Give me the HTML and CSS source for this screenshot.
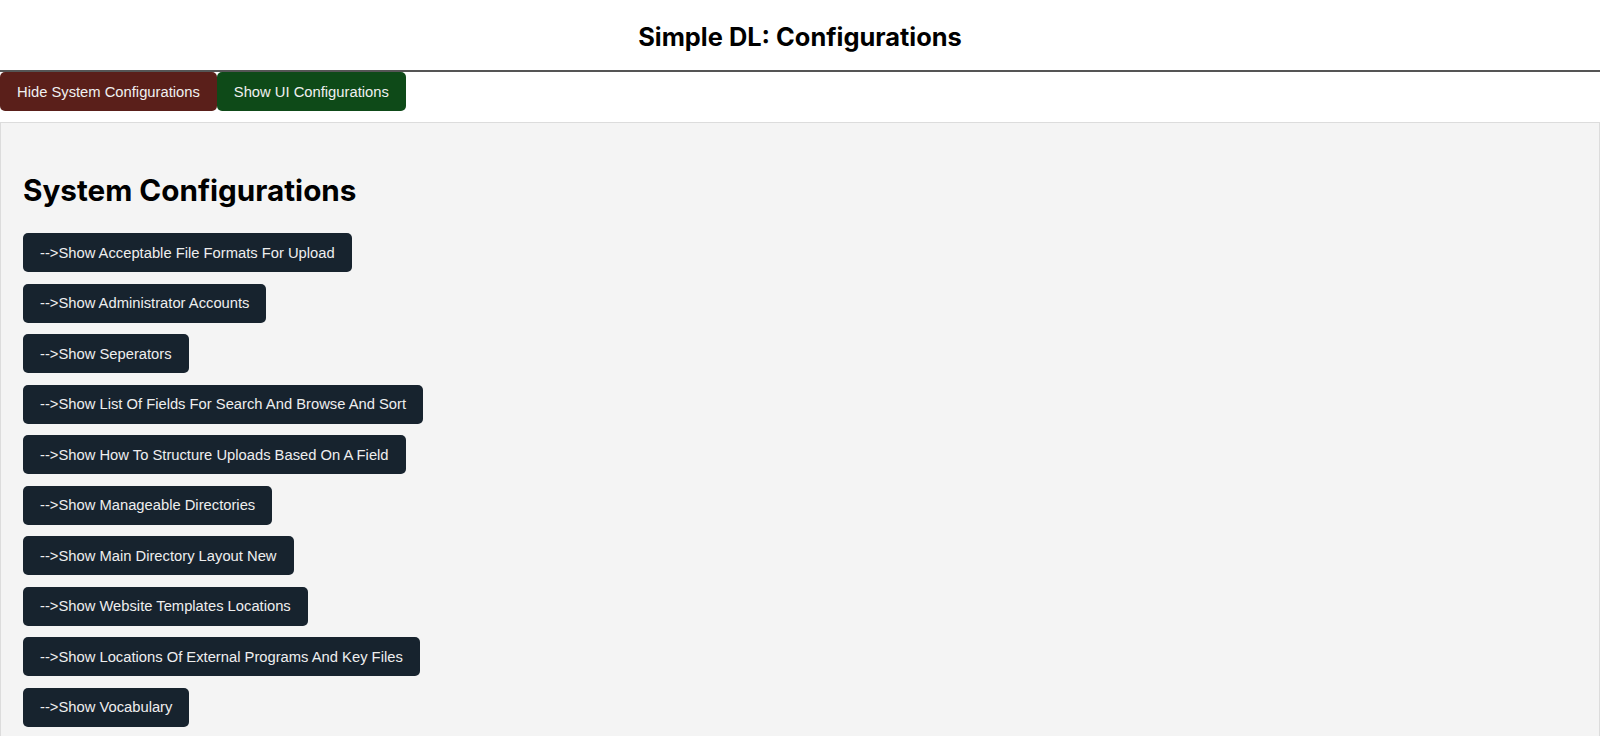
FILE: index.html
```html
<!DOCTYPE html>
<html>
<head>
<meta charset="utf-8">
<title>Simple DL: Configurations</title>
<link rel="stylesheet" href="styles.css">
</head>
<body>
<header class="top">
  <h1 class="title">Simple DL: Configurations</h1>
</header>
<nav class="toggles">
  <button class="toggle toggle-red">Hide System Configurations</button>
  <button class="toggle toggle-green">Show UI Configurations</button>
</nav>
<section class="panel">
  <h2 class="panel-title">System Configurations</h2>
  <div class="list">
    <button class="cfg">--&gt;Show Acceptable File Formats For Upload</button>
    <button class="cfg">--&gt;Show Administrator Accounts</button>
    <button class="cfg">--&gt;Show Seperators</button>
    <button class="cfg">--&gt;Show List Of Fields For Search And Browse And Sort</button>
    <button class="cfg">--&gt;Show How To Structure Uploads Based On A Field</button>
    <button class="cfg">--&gt;Show Manageable Directories</button>
    <button class="cfg">--&gt;Show Main Directory Layout New</button>
    <button class="cfg">--&gt;Show Website Templates Locations</button>
    <button class="cfg">--&gt;Show Locations Of External Programs And Key Files</button>
    <button class="cfg">--&gt;Show Vocabulary</button>
  </div>
</section>
</body>
</html>
```

FILE: styles.css
```css
html, body {
  margin: 0;
  padding: 0;
  background: #ffffff;
}
body {
  font-family: "Liberation Sans", Arial, sans-serif;
  color: #000;
}
.top {
  border-bottom: 2px solid #555555;
  height: 72px;
  box-sizing: border-box;
  display: flex;
  justify-content: center;
  align-items: flex-start;
}
.title {
  font-family: Inter, "Noto Sans", sans-serif;
  font-weight: 700;
  font-size: 25.4px;
  margin: 0;
  padding-top: 22px;
  line-height: 1.21;
}
.toggles {
  display: flex;
  height: 39px;
  margin-bottom: 11px;
}
.toggle {
  font-family: "Liberation Sans", Arial, sans-serif;
  font-size: 14.75px;
  color: #f0f0f0;
  border: none;
  border-radius: 5px;
  padding: 0 17px;
  height: 39px;
  margin: 0;
  cursor: pointer;
}
.toggle-red { background: #5a1f1a; }
.toggle-green { background: #0e4a18; }
.panel {
  background: #f4f4f4;
  border: 1px solid #dcdcdc;
  padding: 0 22px 22px;
  min-height: 700px;
}
.panel-title {
  font-family: Inter, "Noto Sans", sans-serif;
  font-weight: 700;
  font-size: 29.7px;
  line-height: 1.21;
  margin: 49.8px 0 24.6px;
}
.list {
  display: flex;
  flex-direction: column;
  align-items: flex-start;
  gap: 11.5px;
}
.cfg {
  font-family: "Liberation Sans", Arial, sans-serif;
  font-size: 14.75px;
  color: #eeeeee;
  background: #17232e;
  border: none;
  border-radius: 5px;
  height: 39px;
  padding: 0 17px;
  margin: 0;
  cursor: pointer;
}
```
